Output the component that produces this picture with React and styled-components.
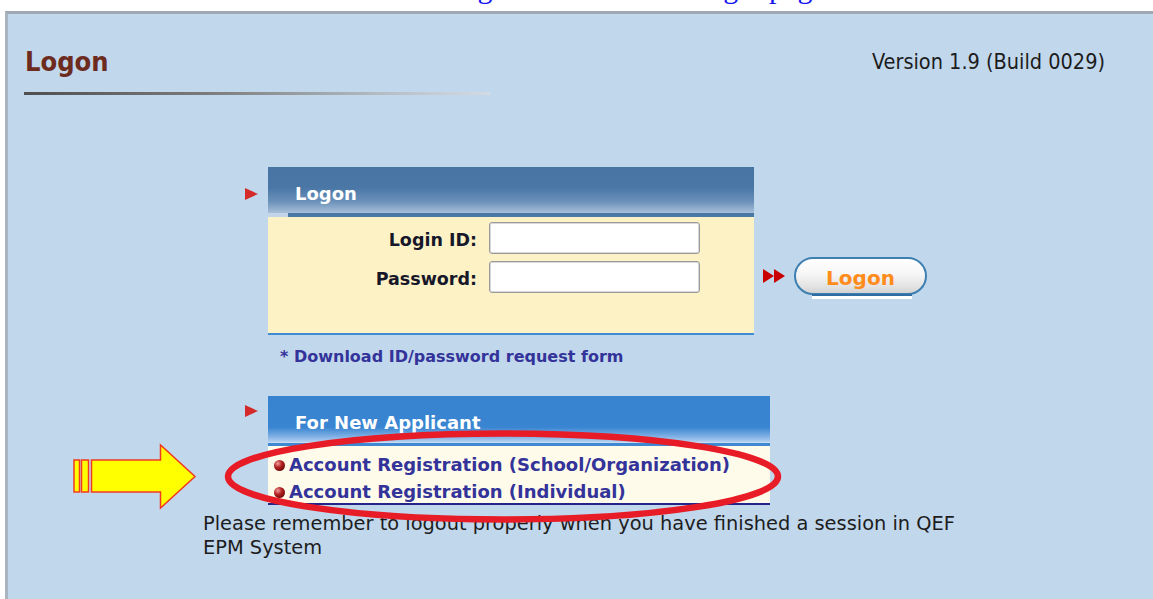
import React from 'react';
import styled, { createGlobalStyle } from 'styled-components';

const GlobalStyle = createGlobalStyle`
  html, body {
    margin: 0;
    padding: 0;
    background: #fff;
  }

  body {
    font-family: "DejaVu Sans", Verdana, sans-serif;
    overflow: hidden;
  }
`;

const headers = {
  logon: {
    fill: 'linear-gradient(#4874a3 0%, #4a77a6 45%, #6b91ba 75%, #a8bfd8 100%)',
    stripe: 'linear-gradient(to right, #c3d5e8 20px, #4a79a8 20px)',
  },
  applicant: {
    fill: 'linear-gradient(#3783d0 0%, #3985d1 68%, #7fb0e4 88%, #b4d1f0 100%)',
    stripe: 'linear-gradient(#c9dcf2 1px, #3f89d3 1px)',
  },
};

const TopStrip = styled.div`
  height: 11px;
  overflow: hidden;
  background: #fff;
`;

const BackLink = styled.a`
  display: block;
  margin: -28px 0 0 315px;
  font-family: "Liberation Serif", "Times New Roman", serif;
  font-size: 30px;
  line-height: 32px;
  color: #1414f0;
  text-decoration: none;
  white-space: nowrap;
`;

const Panel = styled.main`
  margin-left: 5px;
  height: 588px;
  box-sizing: border-box;
  padding: 32px 48px 0 17px;
  border-top: 3px solid #9ea9b3;
  border-left: 3px solid #a8b5c0;
  background: #c1d7ec;
`;

const HeaderRow = styled.div`
  display: flex;
  justify-content: space-between;
  align-items: baseline;
  height: 32px;
  font-family: "DejaVu Sans Condensed", "DejaVu Sans", sans-serif;
  line-height: 32px;
`;

const Title = styled.h1`
  margin: 0;
  font-size: 27px;
  font-weight: bold;
  color: #6d2b20;
`;

const Version = styled.span`
  position: relative;
  top: -2px;
  font-size: 21.5px;
  color: #1c1c1c;
`;

const Rule = styled.div`
  width: 466px;
  height: 3px;
  margin: 14px 0 0 -1px;
  background: linear-gradient(90deg, #4f4f4f 0%, #7c7c7c 40%, #b9c2cb 80%, #d3dce5 100%);
`;

const Center = styled.div`
  width: 780px;
  margin: 72px 0 0 178px;
`;

const FormGrid = styled.section`
  position: relative;
  display: grid;
  grid-template-columns: 65px ${(p) => p.$boxWidth}px auto;
  margin-top: ${(p) => p.$top || 0}px;
`;

const Marker = styled.span`
  justify-self: end;
  align-self: start;
  width: 0;
  height: 0;
  margin: ${(p) => p.$top}px 10px 0 0;
  border-left: 13px solid #d42a2a;
  border-top: 6px solid transparent;
  border-bottom: 6px solid transparent;
`;

const BoxHeader = styled.h2`
  margin: 0;
  height: 50px;
  box-sizing: border-box;
  padding: 8px 0 0 27px;
  background:
    ${(p) => headers[p.$variant].stripe} bottom / 100% 4px no-repeat,
    ${(p) => headers[p.$variant].fill} top / 100% 46px no-repeat;
  color: #fff;
  font-size: 18px;
  font-weight: bold;
  line-height: 38px;
`;

const LoginBody = styled.div`
  grid-column: 2;
  height: 111px;
  padding-top: 5px;
  display: grid;
  grid-template-columns: 209px 211px;
  column-gap: 12px;
  row-gap: 7px;
  align-content: start;
  align-items: center;
  background: #fdf2c6;
  border-bottom: 2px solid #3f8ad0;
`;

const Label = styled.label`
  margin-top: 4px;
  text-align: right;
  font-size: 17.5px;
  font-weight: bold;
  color: #17172a;
`;

const TextInput = styled.input`
  height: 32px;
  box-sizing: border-box;
  border: 1px solid #9a9a9a;
  border-radius: 3px;
  box-shadow: inset 0 0 0 1px #d8d8d8;
  background: #fff;
  outline: none;
`;

const SubmitArea = styled.div`
  align-self: center;
  display: flex;
  align-items: center;
  gap: 9px;
  margin-left: 9px;
`;

const Arrows = styled.span`
  display: flex;

  &::before,
  &::after {
    content: '';
    width: 0;
    height: 0;
    border-left: 11px solid #c80000;
    border-top: 7.5px solid transparent;
    border-bottom: 7.5px solid transparent;
  }
`;

const LogonButton = styled.button`
  position: relative;
  width: 133px;
  height: 38px;
  padding: 3px 0 0;
  border: 2px solid #3d7fb0;
  border-radius: 19px;
  background: linear-gradient(#ffffff 0%, #f6f6f6 45%, #e3e3e3 80%, #d2d2d2 100%);
  color: #ff8c1a;
  font-family: "DejaVu Sans", Verdana, sans-serif;
  font-size: 20px;
  font-weight: bold;
  cursor: pointer;

  &::after {
    content: '';
    position: absolute;
    left: 16px;
    right: 13px;
    top: 35px;
    height: 5px;
    background: linear-gradient(#2f6ea3 2px, #fff 2px);
  }
`;

const DownloadLink = styled.a`
  display: block;
  margin: 12px 0 0 77px;
  font-size: 16px;
  font-weight: bold;
  line-height: 20px;
  color: #33339a;
  text-decoration: none;
`;

const LinkList = styled.ul`
  grid-column: 2;
  list-style: none;
  margin: 0;
  height: 52px;
  padding: 5px 0 0 6px;
  background: #fffbeb;
  border-bottom: 2px solid #24248a;
`;

const LinkItem = styled.li`
  display: flex;
  align-items: center;
  gap: 4px;
  height: 26px;
  font-size: 18px;
  font-weight: bold;
  line-height: 27px;
  color: #33339a;
  white-space: nowrap;

  &::before {
    content: '';
    width: 11px;
    height: 11px;
    margin-top: 3px;
    border-radius: 50%;
    background: radial-gradient(circle at 35% 32%, #f2a0a0 0%, #b42222 38%, #6a0808 80%, #4a0000 100%);
  }

  & + & {
    margin-top: 1px;
  }
`;

const Notice = styled.p`
  margin: 7px 0 0;
  font-size: 19.4px;
  line-height: 24px;
  color: #1d1d1d;
`;

const Annotation = styled.svg`
  position: absolute;
  left: ${(p) => p.$x}px;
  top: ${(p) => p.$y}px;
  overflow: visible;
  pointer-events: none;
`;

const PointerArrow = () => (
  <Annotation $x={-131} $y={48} width="124" height="66" viewBox="0 0 124 66">
    <g fill="#ffff00" stroke="#f23a22" strokeWidth="1.5" strokeLinejoin="miter">
      <rect x="2" y="16" width="5.5" height="32" />
      <rect x="9.5" y="16" width="7" height="32" />
      <path d="M19.5 16 H88.5 V1 L123 32.5 L88.5 64 V48 H19.5 Z" />
    </g>
  </Annotation>
);

const HighlightRing = () => (
  <Annotation $x={21} $y={34} width="558" height="92" viewBox="0 0 558 92">
    <ellipse cx="279" cy="46.5" rx="275" ry="43" fill="none" stroke="#e81c26" strokeWidth="6.5" />
  </Annotation>
);

const App = () => (
  <>
    <GlobalStyle />
    <TopStrip>
      <BackLink href="#">Click here to go back to the old login page</BackLink>
    </TopStrip>
    <Panel>
      <HeaderRow>
        <Title>Logon</Title>
        <Version>Version 1.9 (Build 0029)</Version>
      </HeaderRow>
      <Rule />

      <Center>
        <FormGrid $boxWidth={486}>
          <Marker $top={21} />
          <BoxHeader $variant="logon">Logon</BoxHeader>
          <span />
          <LoginBody>
            <Label htmlFor="login-id">Login ID:</Label>
            <TextInput id="login-id" type="text" />
            <Label htmlFor="password">Password:</Label>
            <TextInput id="password" type="password" />
          </LoginBody>
          <SubmitArea>
            <Arrows />
            <LogonButton type="button">Logon</LogonButton>
          </SubmitArea>
        </FormGrid>

        <DownloadLink href="#">* Download ID/password request form</DownloadLink>

        <FormGrid $boxWidth={502} $top={29}>
          <Marker $top={9} />
          <BoxHeader $variant="applicant">For New Applicant</BoxHeader>
          <LinkList>
            <LinkItem>Account Registration (School/Organization)</LinkItem>
            <LinkItem>Account Registration (Individual)</LinkItem>
          </LinkList>
          <PointerArrow />
          <HighlightRing />
        </FormGrid>

        <Notice>
          Please remember to logout properly when you have finished a session in QEF EPM System
        </Notice>
      </Center>
    </Panel>
  </>
);

export default App;
